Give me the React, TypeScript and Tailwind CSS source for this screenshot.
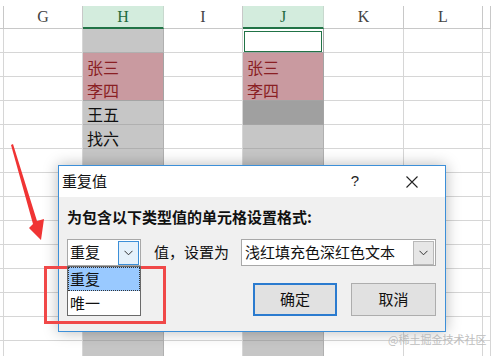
import React from "react";

const cols = ["", "G", "H", "I", "J", "K", "L", ""];
const widths = ["w-[4px]", "w-[79px]", "w-[81px]", "w-[79px]", "w-[81px]", "w-[80px]", "w-[79px]", "flex-1"];

const cellText: Record<string, string> = {
    "2-2": "张三",
    "2-3": "李四",
    "2-4": "王五",
    "2-5": "找六",
    "4-2": "张三",
    "4-3": "李四",
};

const cellClass = (c: number, r: number) => {
    if (c === 2 || c === 4) {
        if (r === 2) return "bg-[#c99aa0] border-r border-[#a4a4a4] text-[#8a1f24] pl-[4px] pt-[3px]";
        if (r === 3) return "bg-[#c99aa0] border-r border-b border-[#a4a4a4] text-[#8a1f24] pl-[4px] pt-[3px]";
        if (c === 4 && r === 1) return "bg-white border-r border-b border-[#a4a4a4] pl-[1px] pt-[1px]";
        if (c === 4 && r === 4) return "bg-[#a0a0a0] border-r border-b border-[#a4a4a4]";
        return "bg-[#c6c6c6] border-r border-b border-[#b0b0b0] text-[#111] pl-[4px] pt-[3px]";
    }
    return "bg-white border-r border-b border-[#d6d6d6]";
};

const Chevron = () => (
    <svg width="9" height="6" viewBox="0 0 9 6">
        <path d="M0.5 0.8 L4.5 4.8 L8.5 0.8" fill="none" stroke="#333" strokeWidth="1" />
    </svg>
);

const Sheet = () => (
    <div className="w-full h-full bg-white pt-[6px] overflow-hidden">
        <div className="flex h-[23px]">
            {cols.map((name, c) => (
                <div
                    key={c}
                    className={
                        widths[c] +
                        " shrink-0 flex items-center justify-center font-['Liberation_Serif',serif] text-[16px] " +
                        (c === 2 || c === 4
                            ? "bg-[#d3ecdd] text-[#1f6b3f] border-r border-[#c8d8ce] border-b-2 border-b-[#217346]"
                            : "text-[#444] border-r border-b border-[#c8c8c8]")
                    }
                >
                    {name}
                </div>
            ))}
        </div>
        {Array.from({ length: 14 }, (_, i) => i + 1).map((r) => (
            <div key={r} className="flex h-[24px]">
                {cols.map((_, c) => (
                    <div key={c} className={widths[c] + " shrink-0 flex items-center text-[16px] " + cellClass(c, r)}>
                        {c === 4 && r === 1 && <div className="w-[78px] h-[21px] border border-[#217346]"></div>}
                        {cellText[c + "-" + r] || ""}
                    </div>
                ))}
            </div>
        ))}
    </div>
);

const Dialog = () => (
    <div className="absolute left-[58px] top-[165px] w-[388px] h-[167px] border border-[#3c8fd8] bg-[#f0f0f0] shadow-[0_0_14px_rgba(0,0,0,0.28)] flex flex-col">
        <div className="h-[31px] bg-white flex items-center pl-[3px] text-[15px] text-[#111]">
            <span>重复值</span>
            <span className="ml-auto mr-[47px] text-[15px] text-[#222] font-['Liberation_Sans',sans-serif]">?</span>
            <svg width="12" height="12" viewBox="0 0 12 12" className="mr-[27px]">
                <path d="M0.5 0.5 L11.5 11.5 M11.5 0.5 L0.5 11.5" stroke="#222" strokeWidth="1.1" />
            </svg>
        </div>
        <div className="pl-[8px] pt-[11px] text-[15px] font-bold text-[#111] leading-[17px]">
            为包含以下类型值的单元格设置格式:
        </div>
        <div className="flex items-center pl-[8px] mt-[14px] h-[27px]">
            <div className="relative w-[74px] h-[27px] bg-white border border-[#a8a8a8] flex items-center">
                <span className="pl-[2px] text-[15px] text-[#111]">重复</span>
                <div className="ml-auto mr-[1px] w-[21px] h-[24px] border border-[#3c8fd8] bg-[#e5f1fb] flex items-center justify-center">
                    <Chevron />
                </div>
                <div className="absolute left-[-1px] top-[26px] w-[74px] h-[50px] bg-white border border-[#6a6a6a] flex flex-col z-10">
                    <div className="h-[24px] bg-[#99c9ff] border border-dotted border-[#333] flex items-center pl-[1px] text-[15px] text-[#111]">重复</div>
                    <div className="h-[24px] flex items-center pl-[2px] text-[15px] text-[#111]">唯一</div>
                </div>
            </div>
            <span className="ml-[13px] text-[15px] text-[#111]">值，设置为</span>
            <div className="ml-[12px] w-[195px] h-[27px] bg-white border border-[#a8a8a8] flex items-center">
                <span className="pl-[3px] text-[15px] text-[#111]">浅红填充色深红色文本</span>
                <div className="ml-auto mr-[1px] w-[21px] h-[24px] border border-[#b8b8b8] bg-[#e6e6e6] flex items-center justify-center">
                    <Chevron />
                </div>
            </div>
        </div>
        <div className="flex justify-end pr-[9px] mt-[17px] gap-[14px]">
            <div className="w-[84px] h-[33px] bg-[#e1e1e1] border-2 border-[#2b7bcf] flex items-center justify-center text-[15px] text-[#111]">确定</div>
            <div className="w-[85px] h-[33px] bg-[#e1e1e1] border border-[#adadad] flex items-center justify-center text-[15px] text-[#111]">取消</div>
        </div>
    </div>
);

const App = () => {
    return (
        <div className="relative w-[491px] h-[356px] overflow-hidden font-['Noto_Sans_CJK_SC','Noto_Sans',sans-serif]">
            <Sheet />
            <Dialog />
            <div className="absolute left-[44px] top-[266px] w-[122px] h-[58px] border-[3px] border-[#f04848]"></div>
            <svg className="absolute left-0 top-0" width="60" height="250" viewBox="0 0 60 250">
                <polygon points="11,145 13,144 37,221 44,219 41,240 29,228 33,224" fill="#f03434" />
            </svg>
            <div className="absolute left-[388px] top-[331px] whitespace-nowrap text-[11px] text-[#bdbdbd]">@稀土掘金技术社区</div>
        </div>
    );
};

export default App;
